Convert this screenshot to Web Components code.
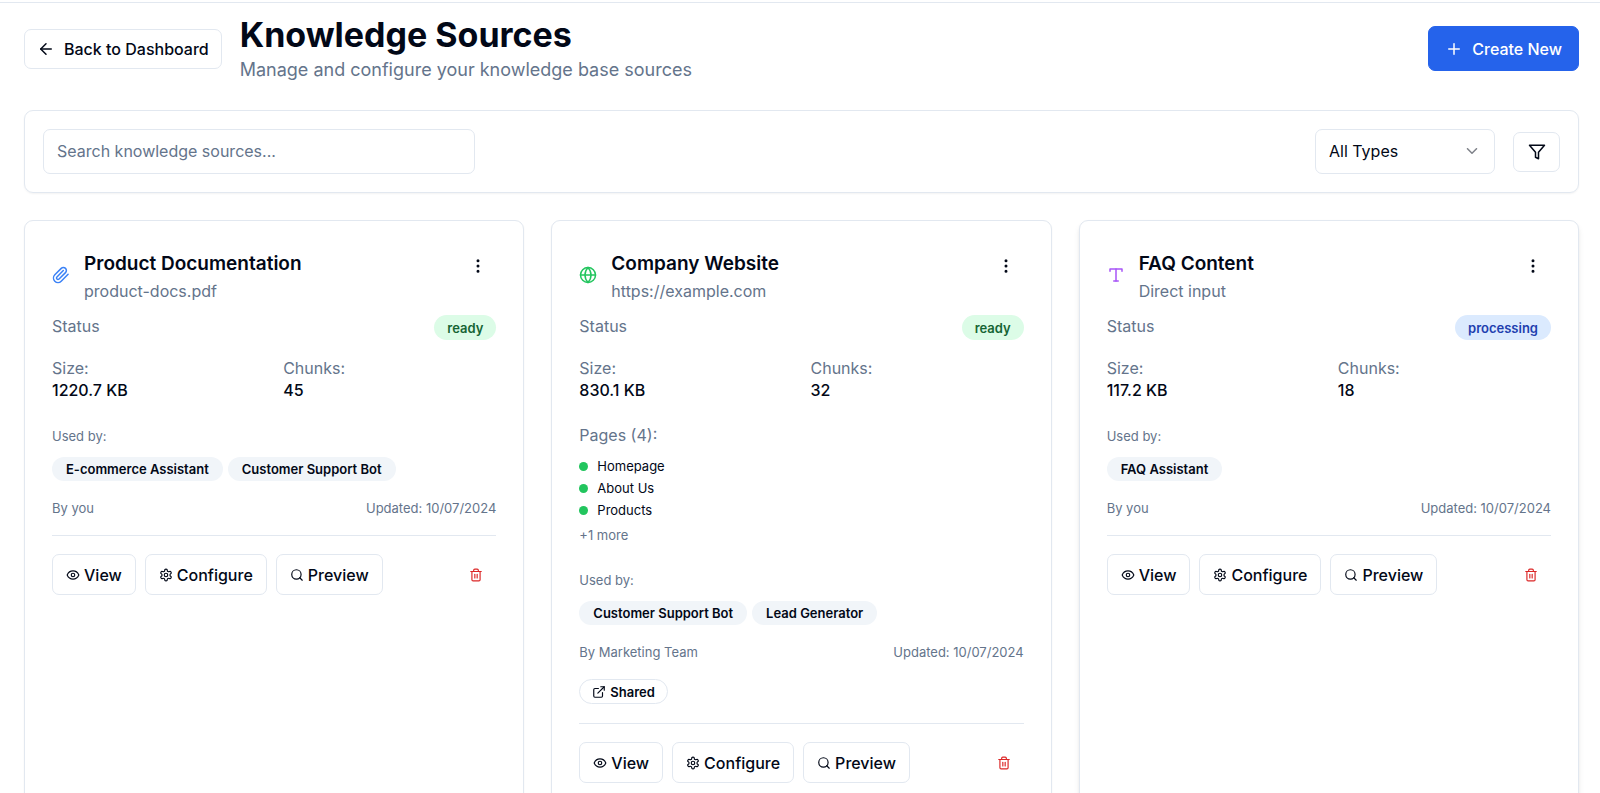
<!DOCTYPE html>
<html lang="en">
<head>
<meta charset="utf-8">
<meta name="viewport" content="width=device-width, initial-scale=1">
<title>Knowledge Sources</title>
<style>
  :root {
    --fg: #020817;
    --muted: #64748b;
    --line: #e2e8f0;
    --soft: #f1f5f9;
    --primary: #2563eb;
  }
  body {
    margin: 0;
    background: #fff;
    color: var(--fg);
    font: 400 16px/22px Inter, sans-serif;
  }
</style>
</head>
<body>
<knowledge-page>
  <page-header slot="header" heading="Knowledge Sources">Manage and configure your knowledge base sources</page-header>
  <source-toolbar slot="toolbar"></source-toolbar>

  <source-card icon="paperclip" tone="blue" heading="Product Documentation" origin="product-docs.pdf"
               status="ready" size="1220.7 KB" chunks="45" owner="By you" updated="10/07/2024">
    <tag-pill slot="used">E-commerce Assistant</tag-pill>
    <tag-pill slot="used">Customer Support Bot</tag-pill>
  </source-card>

  <source-card icon="globe" tone="green" heading="Company Website" origin="https://example.com"
               status="ready" size="830.1 KB" chunks="32" owner="By Marketing Team" updated="10/07/2024" shared>
    <page-list slot="pages" total="4" pages="Homepage|About Us|Products"></page-list>
    <tag-pill slot="used">Customer Support Bot</tag-pill>
    <tag-pill slot="used">Lead Generator</tag-pill>
  </source-card>

  <source-card icon="type" tone="purple" heading="FAQ Content" origin="Direct input" raised
               status="processing" size="117.2 KB" chunks="18" owner="By you" updated="10/07/2024">
    <tag-pill slot="used">FAQ Assistant</tag-pill>
  </source-card>
</knowledge-page>

<script>
const ICONS = {
  back: '<path d="m12 19-7-7 7-7"/><path d="M19 12H5"/>',
  plus: '<path d="M5 12h14"/><path d="M12 5v14"/>',
  chevron: '<path d="m6 9 6 6 6-6"/>',
  filter: '<polygon points="22 3 2 3 10 12.46 10 19 14 21 14 12.46 22 3"/>',
  paperclip: '<path d="m21.44 11.05-9.19 9.19a6 6 0 0 1-8.49-8.49l8.57-8.57A4 4 0 1 1 18 8.84l-8.59 8.57a2 2 0 0 1-2.83-2.83l8.49-8.48"/>',
  globe: '<circle cx="12" cy="12" r="10"/><path d="M12 2a14.5 14.5 0 0 0 0 20 14.5 14.5 0 0 0 0-20"/><path d="M2 12h20"/>',
  type: '<polyline points="4 7 4 4 20 4 20 7"/><line x1="9" x2="15" y1="20" y2="20"/><line x1="12" x2="12" y1="4" y2="20"/>',
  more: '<circle cx="12" cy="12" r="1"/><circle cx="12" cy="5" r="1"/><circle cx="12" cy="19" r="1"/>',
  eye: '<path d="M2 12s3-7 10-7 10 7 10 7-3 7-10 7-10-7-10-7Z"/><circle cx="12" cy="12" r="3"/>',
  settings: '<path d="M12.22 2h-.44a2 2 0 0 0-2 2v.18a2 2 0 0 1-1 1.73l-.43.25a2 2 0 0 1-2 0l-.15-.08a2 2 0 0 0-2.73.73l-.22.38a2 2 0 0 0 .73 2.73l.15.1a2 2 0 0 1 1 1.72v.51a2 2 0 0 1-1 1.74l-.15.09a2 2 0 0 0-.73 2.73l.22.38a2 2 0 0 0 2.73.73l.15-.08a2 2 0 0 1 2 0l.43.25a2 2 0 0 1 1 1.73V20a2 2 0 0 0 2 2h.44a2 2 0 0 0 2-2v-.18a2 2 0 0 1 1-1.73l.43-.25a2 2 0 0 1 2 0l.15.08a2 2 0 0 0 2.73-.73l.22-.39a2 2 0 0 0-.73-2.73l-.15-.08a2 2 0 0 1-1-1.74v-.5a2 2 0 0 1 1-1.74l.15-.09a2 2 0 0 0 .73-2.73l-.22-.38a2 2 0 0 0-2.73-.73l-.15.08a2 2 0 0 1-2 0l-.43-.25a2 2 0 0 1-1-1.73V4a2 2 0 0 0-2-2z"/><circle cx="12" cy="12" r="3"/>',
  search: '<circle cx="11" cy="11" r="8"/><path d="m21 21-4.3-4.3"/>',
  trash: '<path d="M3 6h18"/><path d="M19 6v14c0 1-1 2-2 2H7c-1 0-2-1-2-2V6"/><path d="M8 6V4c0-1 1-2 2-2h4c1 0 2 1 2 2v2"/><path d="M10 11v6"/><path d="M14 11v6"/>',
  external: '<path d="M15 3h6v6"/><path d="M10 14 21 3"/><path d="M18 13v6a2 2 0 0 1-2 2H5a2 2 0 0 1-2-2V8a2 2 0 0 1 2-2h6"/>'
};

class BaseElement extends HTMLElement {
  constructor() {
    super();
    this.attachShadow({ mode: 'open' });
  }
  connectedCallback() {
    this.shadowRoot.innerHTML =
      `<style>*{box-sizing:border-box}:host{display:block}${this.css()}</style>${this.html()}`;
  }
  attr(name) { return this.getAttribute(name) || ''; }
}

customElements.define('line-icon', class extends BaseElement {
  css() {
    return `:host{display:block;flex:none;width:18px;height:18px}
      :host([small]){width:14px;height:14px}
      svg{display:block;width:100%;height:100%}`;
  }
  html() {
    return `<svg viewBox="0 0 24 24" fill="none" stroke="currentColor" stroke-width="2"
      stroke-linecap="round" stroke-linejoin="round" aria-hidden="true">${ICONS[this.attr('name')]}</svg>`;
  }
});

customElements.define('ui-button', class extends BaseElement {
  css() {
    return `:host{flex:none}
      button{display:flex;align-items:center;justify-content:center;gap:9px;width:100%;height:40px;
        margin:0;padding:0 12px;border:1px solid var(--line);border-radius:7px;background:#fff;
        color:inherit;font:500 16px/22px Inter,sans-serif;white-space:nowrap;cursor:pointer}
      :host([kind=primary]) button{height:45px;padding:0 16px;background:var(--primary);border-color:var(--primary);color:#fff}
      :host([kind=ghost]) button{height:36px;border-color:transparent;background:none}
      :host([kind=danger]) button{height:41px;border-color:transparent;background:none;color:#dc2626}
      :host([kind=compact]) button{height:41px;gap:4px;padding:0 13px}`;
  }
  html() {
    const label = this.attr('label');
    return `<button type="button"${label ? ` aria-label="${label}"` : ''}><slot></slot></button>`;
  }
});

customElements.define('tag-pill', class extends BaseElement {
  css() {
    return `:host{box-sizing:border-box;display:flex;align-items:center;gap:4px;height:24px;padding:0 14px;border-radius:12px;
        background:var(--soft);color:var(--fg);font:600 13px/18px Inter,sans-serif;white-space:nowrap}
      :host([kind=ready]),:host([kind=processing]),:host([kind=outline]){height:25px;padding:0 13px;border-radius:13px}
      :host([kind=ready]){background:#dcfce7;color:#166534}
      :host([kind=processing]){background:#dbeafe;color:#1e40af}
      :host([kind=outline]){background:#fff;border:1px solid var(--line);padding:0 12px}`;
  }
  html() { return '<slot></slot>'; }
});

customElements.define('page-header', class extends BaseElement {
  css() {
    return `:host{display:flex;align-items:center;gap:18px}
      .text{flex:1}
      h1{margin:0;font-size:34px;line-height:42px;font-weight:700}
      p{margin:0;font-size:18px;line-height:27px;color:var(--muted)}`;
  }
  html() {
    return `<ui-button><line-icon name="back"></line-icon>Back to Dashboard</ui-button>
      <div class="text"><h1>${this.attr('heading')}</h1><p><slot></slot></p></div>
      <ui-button kind="primary"><line-icon name="plus"></line-icon>Create New</ui-button>`;
  }
});

customElements.define('source-toolbar', class extends BaseElement {
  css() {
    return `:host{display:flex;align-items:center;justify-content:space-between;gap:18px;padding:18px;
        box-sizing:border-box;border:1px solid var(--line);border-radius:9px;box-shadow:0 1px 2px rgb(0 0 0 / 5%)}
      input,select{width:100%;height:45px;margin:0;padding:0 13px 2px;border:1px solid var(--line);border-radius:7px;
        background:#fff;color:var(--fg);font:400 16px/22px Inter,sans-serif;appearance:none;outline:none}
      input::placeholder{color:var(--muted);opacity:1}
      .search{flex:0 1 432px}
      .filters{display:flex;align-items:center;gap:18px}
      .types{position:relative;width:180px}
      .types line-icon{position:absolute;right:14px;top:13px;opacity:.5;pointer-events:none}
      .filter{width:47px}`;
  }
  html() {
    return `<div class="search"><input type="text" aria-label="Search knowledge sources" placeholder="Search knowledge sources..."></div>
      <div class="filters">
        <div class="types"><select aria-label="Source type"><option>All Types</option></select><line-icon name="chevron"></line-icon></div>
        <ui-button class="filter" label="Filter"><line-icon name="filter"></line-icon></ui-button>
      </div>`;
  }
});

customElements.define('page-list', class extends BaseElement {
  css() {
    return `.title{color:var(--muted)}
      ul{list-style:none;display:grid;gap:4px;margin:11px 0 7px;padding:0;font-size:13px;line-height:18px}
      li{display:flex;align-items:center;gap:9px}
      li::before{content:"";width:9px;height:9px;border-radius:50%;background:#22c55e}
      .more{font-size:13px;line-height:18px;color:var(--muted)}`;
  }
  html() {
    const pages = this.attr('pages').split('|');
    const total = Number(this.attr('total'));
    return `<div class="title">Pages (${total}):</div>
      <ul>${pages.map(p => `<li>${p}</li>`).join('')}</ul>
      <div class="more">+${total - pages.length} more</div>`;
  }
});

customElements.define('source-card', class extends BaseElement {
  css() {
    return `:host{box-sizing:border-box;min-width:0;padding:27px;border:1px solid var(--line);border-radius:9px;
        background:#fff;box-shadow:0 1px 2px rgb(0 0 0 / 5%)}
      :host([raised]){box-shadow:0 4px 6px -1px rgb(0 0 0 / 10%),0 2px 4px -2px rgb(0 0 0 / 10%)}
      :host([tone=blue]){--tone:#3b82f6}
      :host([tone=green]){--tone:#22c55e}
      :host([tone=purple]){--tone:#a855f7}
      header{display:flex;align-items:center;gap:14px}
      header > line-icon{color:var(--tone)}
      header > div{flex:1}
      header ui-button{width:36px;align-self:flex-start}
      h3{margin:0;font-size:19px;line-height:32px;font-weight:600}
      header p{margin:0;color:var(--muted)}
      .row{display:flex;align-items:center;justify-content:space-between}
      .status{align-items:flex-start;margin-top:13px;color:var(--muted)}
      dl{display:grid;grid-template-columns:1fr 1fr;gap:18px;margin:17px 0 23px}
      dt{color:var(--muted)}
      dd{margin:0;font-weight:500}
      ::slotted(page-list){margin-bottom:24px}
      .small{font-size:13px;line-height:18px;color:var(--muted)}
      .used{line-height:24px}
      .tags{display:flex;flex-wrap:wrap;gap:5px;margin:9px 0 18px}
      .shared{display:flex;padding:18px 0 1px}
      footer{display:flex;gap:9px;margin-top:18px;padding-top:18px;border-top:1px solid var(--line)}
      .delete{width:40px;margin-left:auto}`;
  }
  html() {
    const a = n => this.attr(n);
    return `<header>
        <line-icon name="${a('icon')}"></line-icon>
        <div><h3>${a('heading')}</h3><p>${a('origin')}</p></div>
        <ui-button kind="ghost" label="More options"><line-icon name="more"></line-icon></ui-button>
      </header>
      <div class="row status"><span>Status</span><tag-pill kind="${a('status')}">${a('status')}</tag-pill></div>
      <dl>
        <div><dt>Size:</dt><dd>${a('size')}</dd></div>
        <div><dt>Chunks:</dt><dd>${a('chunks')}</dd></div>
      </dl>
      <slot name="pages"></slot>
      <div class="small used">Used by:</div>
      <div class="tags"><slot name="used"></slot></div>
      <div class="row small"><span>${a('owner')}</span><span>Updated: ${a('updated')}</span></div>
      ${this.hasAttribute('shared') ? '<div class="shared"><tag-pill kind="outline"><line-icon name="external" small></line-icon>Shared</tag-pill></div>' : ''}
      <footer>
        <ui-button kind="compact"><line-icon name="eye" small></line-icon>View</ui-button>
        <ui-button kind="compact"><line-icon name="settings" small></line-icon>Configure</ui-button>
        <ui-button kind="compact"><line-icon name="search" small></line-icon>Preview</ui-button>
        <ui-button class="delete" kind="danger" label="Delete"><line-icon name="trash" small></line-icon></ui-button>
      </footer>`;
  }
});

customElements.define('knowledge-page', class extends BaseElement {
  css() {
    return `.bar{height:3px;border-bottom:1px solid var(--line)}
      main{display:grid;gap:27px;padding:11px 21px 27px 24px}
      .cards{display:grid;grid-template-columns:repeat(3,minmax(0,1fr));gap:27px}
      @media (max-width:1100px){.cards{grid-template-columns:1fr}}`;
  }
  html() {
    return `<div class="bar"></div>
      <main>
        <slot name="header"></slot>
        <slot name="toolbar"></slot>
        <section class="cards" aria-label="Sources"><slot></slot></section>
      </main>`;
  }
});
</script>
</body>
</html>
